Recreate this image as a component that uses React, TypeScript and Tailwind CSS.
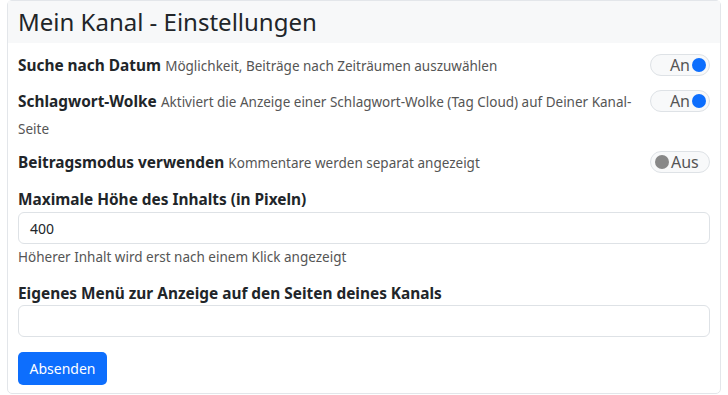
import React from "react";

const Toggle = ({ on }: { on: boolean }) => (
  <div className="flex h-[22px] w-[60px] shrink-0 items-center rounded-full border border-[#dee2e6] bg-[#f8f9fa] px-[3px] text-[16px] text-[#555]">
    {on ? (
      <>
        <span className="ml-auto mr-[2px] leading-none">An</span>
        <span className="h-[14px] w-[14px] rounded-full bg-[#0d6efd]" />
      </>
    ) : (
      <>
        <span className="ml-[1px] h-[14px] w-[14px] rounded-full bg-[#888]" />
        <span className="ml-[2px] leading-none">Aus</span>
      </>
    )}
  </div>
);

const SwitchRow = ({
  title,
  desc,
  on,
}: {
  title: string;
  desc: string;
  on: boolean;
}) => (
  <div className="flex items-start justify-between gap-3">
    <div className="leading-[26px]">
      <span className="text-[15.4px] font-bold text-[#212529]">{title}</span>{" "}
      <span className="text-[13.5px] text-[#555]">{desc}</span>
    </div>
    <div className="pt-[2px]">
      <Toggle on={on} />
    </div>
  </div>
);

export default function App() {
  return (
    <div
      className="bg-white px-[7px]"
      style={{ fontFamily: '"Noto Sans", "Open Sans", sans-serif' }}
    >
      <div className="h-[394px] rounded-[5px] border border-[#e3e6ea]">
        <div className="flex h-[42px] items-center bg-[#f7f8f9] px-[10px] text-[24px] text-[#212529]">
          Mein Kanal - Einstellungen
        </div>
        <div className="flex flex-col px-[10px] pt-[9px]">
          <SwitchRow
            title="Suche nach Datum"
            desc="Möglichkeit, Beiträge nach Zeiträumen auszuwählen"
            on
          />
          <div className="h-[9px]" />
          <SwitchRow
            title="Schlagwort-Wolke"
            desc="Aktiviert die Anzeige einer Schlagwort-Wolke (Tag Cloud) auf Deiner Kanal-Seite"
            on
          />
          <div className="h-[7px]" />
          <SwitchRow
            title="Beitragsmodus verwenden"
            desc="Kommentare werden separat angezeigt"
            on={false}
          />
          <div className="mt-[11px] text-[15.4px] font-bold leading-[25px] text-[#212529]">
            Maximale Höhe des Inhalts (in Pixeln)
          </div>
          <div className="flex h-[32px] items-center rounded-[6px] border border-[#dee2e6] px-[11px] text-[14px] text-[#212529]">
            400
          </div>
          <div className="mt-[3px] text-[13.5px] leading-[20px] text-[#555]">
            Höherer Inhalt wird erst nach einem Klick angezeigt
          </div>
          <div className="mt-[15px] text-[15.4px] font-bold leading-[23px] text-[#212529]">
            Eigenes Menü zur Anzeige auf den Seiten deines Kanals
          </div>
          <div className="h-[32px] rounded-[6px] border border-[#dee2e6]" />
          <div className="mt-[15px]">
            <button className="h-[33px] w-[89px] rounded-[5px] bg-[#0d6efd] text-[14px] text-white">
              Absenden
            </button>
          </div>
        </div>
      </div>
    </div>
  );
}
